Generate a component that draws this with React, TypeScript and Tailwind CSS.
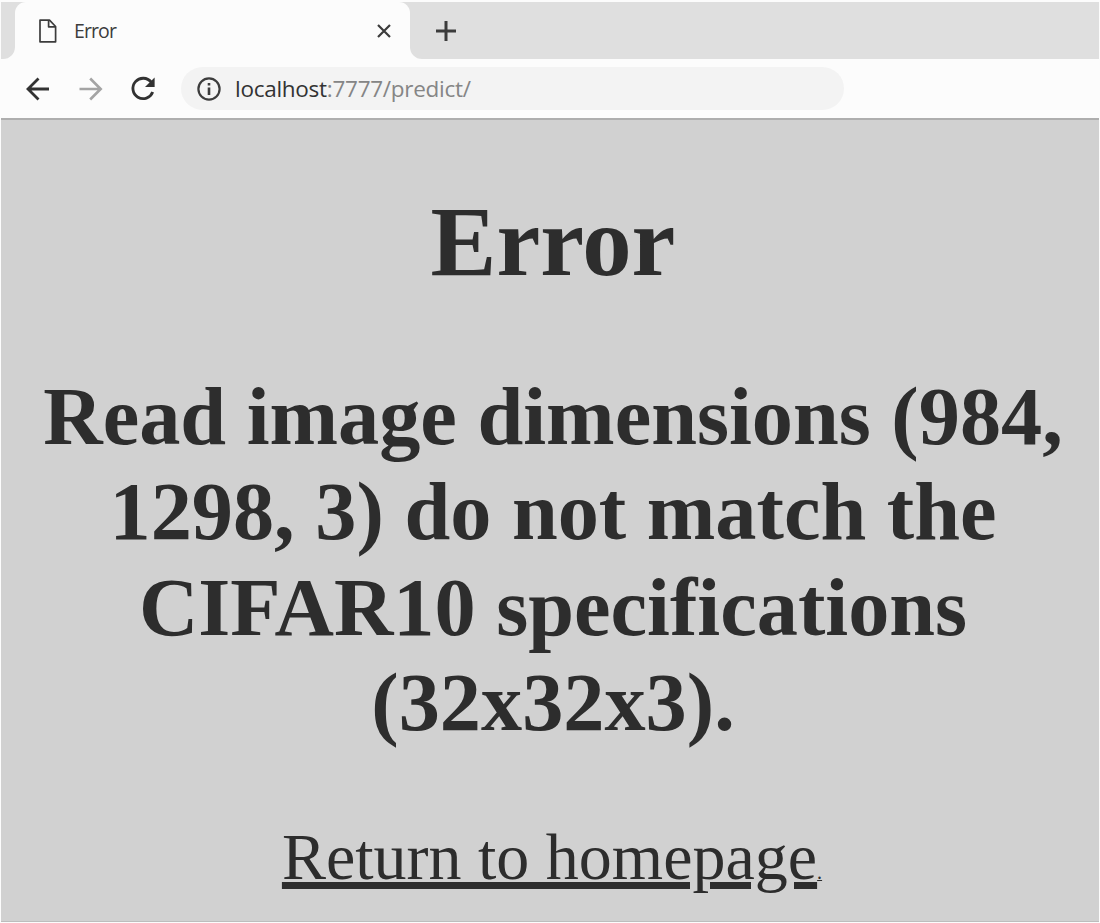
const messageLines = [
  'Read image dimensions (984,',
  '1298, 3) do not match the',
  'CIFAR10 specifications',
  '(32x32x3).',
];

function TabStrip() {
  return (
    <div className="flex h-[57px] shrink-0">
      <div className="w-3.5 bg-[#fcfcfc]">
        <div className="h-full rounded-br-[12px] bg-[#dfdfdf]" />
      </div>
      <div className="w-[395px] bg-[#dfdfdf]">
        <div className="flex h-full items-center rounded-t-[11px] bg-[#fcfcfc] pl-[24px] pr-[18px]">
          <svg width="18" height="24" viewBox="0 0 18 24" fill="none" stroke="#3c3c3c" strokeWidth="1.7" strokeLinejoin="round">
            <path d="M1 1.2H10.5L16.6 7.5V22.8H1Z" />
            <path d="M9.6 1.6V7.8H16.2" />
          </svg>
          <span className="ml-[17px] text-[19.5px] leading-6 tracking-[-0.9px] text-[#3c3c3c]">Error</span>
          <svg className="ml-auto" width="16" height="16" viewBox="0 0 16 16" stroke="#3c3c3c" strokeWidth="2.2">
            <path d="M2 2L14 14M14 2L2 14" />
          </svg>
        </div>
      </div>
      <div className="flex-1 bg-[#fcfcfc]">
        <div className="flex h-full items-center rounded-bl-[12px] bg-[#dfdfdf] pl-[25px]">
          <svg width="22" height="22" viewBox="0 0 22 22" stroke="#3c3c3c" strokeWidth="3">
            <path d="M1 11H21M11 1V21" />
          </svg>
        </div>
      </div>
    </div>
  );
}

function Toolbar() {
  return (
    <div className="flex h-[59px] shrink-0 items-center bg-[#fcfcfc] pl-[24px]">
      <svg width="26" height="26" viewBox="0 0 26 26" fill="none" stroke="#323232" strokeWidth="2.8">
        <path d="M24 13H3.5M13.5 2.5L3 13L13.5 23.5" />
      </svg>
      <svg className="ml-[27px]" width="26" height="26" viewBox="0 0 26 26" fill="none" stroke="#a4a4a4" strokeWidth="2.6">
        <path d="M1.5 13H22.5M12.2 2.5L22.7 13L12.2 23.5" />
      </svg>
      <svg className="ml-[26px]" width="26" height="26" viewBox="0 0 26 26" fill="none" stroke="#323232" strokeWidth="2.8">
        <path d="M21.2 6.2A10.2 10.2 0 1 0 22.7 16" />
        <path d="M24.6 1.4V11H15Z" fill="#323232" stroke="none" />
      </svg>
      <div className="ml-[25px] flex h-[43px] w-[663px] items-center rounded-full bg-[#f3f3f3] pl-4">
        <svg width="24" height="24" viewBox="0 0 24 24" fill="none" stroke="#3c3c3c">
          <circle cx="12" cy="12" r="10.6" strokeWidth="2.2" />
          <path d="M12 10.6V18M12 6V8.6" strokeWidth="2.6" />
        </svg>
        <span className="ml-[14px] whitespace-nowrap text-[22.5px] leading-7 tracking-[-0.27px] text-[#858585]">
          <span className="text-[#323232]">localhost</span>:7777/predict/
        </span>
      </div>
    </div>
  );
}

export default function App() {
  return (
    <div className="flex h-[923px] w-[1100px] flex-col overflow-hidden bg-[#fcfcfc] pb-px pl-px pr-px pt-0.5 font-['Open_Sans',sans-serif]">
      <TabStrip />
      <Toolbar />
      <main className="flex flex-1 flex-col items-center border-b border-t-2 border-b-[#bdbdbd] border-t-[#aeaeae] bg-[#d1d1d1] pl-1.5 pt-[67px] font-['Liberation_Serif',serif] text-[#2d2d2d]">
        <h1 className="text-[98.7px] font-bold leading-[110px]">Error</h1>
        <h2 className="mt-[72px] whitespace-nowrap text-center text-[82.3px] font-bold leading-[95.4px]">
          {messageLines.map((line) => (
            <span key={line} className="block">
              {line}
            </span>
          ))}
        </h2>
        <p className="mr-0.5 mt-[68px] flex items-baseline whitespace-nowrap text-[66px] leading-[76px]">
          <a
            href="#"
            className="underline decoration-[7px] underline-offset-[3px]"
          >
            Return to homepage
          </a>
          <span className="text-[20px] leading-none underline decoration-1 underline-offset-1">.</span>
        </p>
      </main>
    </div>
  );
}
